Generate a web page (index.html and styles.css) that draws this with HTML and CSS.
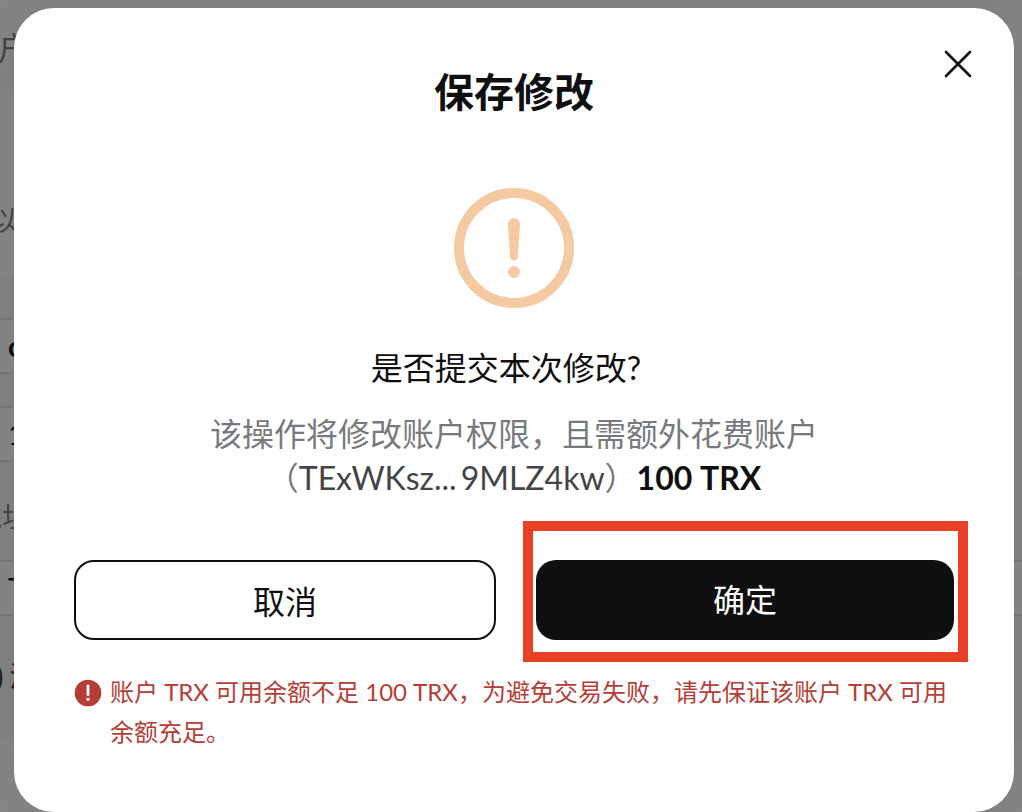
FILE: index.html
```html
<!DOCTYPE html>
<html lang="zh-CN">
<head>
<meta charset="utf-8">
<title>保存修改</title>
<link rel="stylesheet" href="styles.css">
</head>
<body>
<div class="page" aria-hidden="true">
  <div class="page-header"><span class="page-tab">户</span></div>
  <div class="page-intro"><span class="page-hint">以</span></div>
  <div class="page-form">
    <div class="field field-first"><span>o</span></div>
    <div class="field field-second"><span>1</span></div>
    <div class="field-label">地址</div>
    <div class="field field-third"><span>T</span></div>
    <div class="page-check"><span>)</span><span>添</span></div>
  </div>
</div>
<main class="dialog" role="dialog" aria-modal="true" aria-labelledby="dialog-title">
  <button class="close" type="button" aria-label="关闭">
    <svg viewBox="0 0 28 28" width="28" height="28"><path d="M2 2 26 26M26 2 2 26" fill="none" stroke="#0f0f0f" stroke-width="2.6" stroke-linecap="round"/></svg>
  </button>
  <h1 class="title" id="dialog-title">保存修改</h1>
  <svg class="warn" viewBox="0 0 120 120" width="120" height="120" fill="#f5c9a2">
    <circle cx="60" cy="60" r="55" fill="none" stroke="#f5c9a2" stroke-width="10"/>
    <path d="M54 36a6 6 0 0 1 12 0L64 68.500a4 4 0 0 1-8 0Z"/>
    <circle cx="60" cy="84" r="6"/>
  </svg>
  <p class="question">是否提交本次修改?</p>
  <p class="desc">该操作将修改账户权限，且需额外花费账户<br>（<span class="account"><span>TExWKsz...</span><span>9MLZ4kw</span></span>）<strong>100 TRX</strong></p>
  <div class="actions">
    <button class="btn btn-cancel" type="button">取消</button>
    <button class="btn btn-ok" type="button">确定</button>
  </div>
  <div class="note">
    <svg class="note-icon" viewBox="0 0 28 28" width="28" height="28">
      <circle cx="14" cy="14" r="13.300" fill="#b43e36"/>
      <path d="M14 7V15.500" stroke="#fff" stroke-width="2.800" stroke-linecap="round"/>
      <circle cx="14" cy="20.300" r="1.600" fill="#fff"/>
    </svg>
    <p class="note-text">账户 TRX 可用余额不足 100 TRX，为避免交易失败，请先保证该账户 TRX 可用余额充足。</p>
  </div>
</main>
</body>
</html>
```
FILE: styles.css
```css
* { box-sizing: border-box; }

body {
  position: relative;
  margin: 0;
  overflow-x: hidden;
  background: #808080;
  color: #0f0f0f;
  font-family: Lato, "Noto Sans CJK SC", sans-serif;
}

h1, p { margin: 0; }

.page {
  position: absolute;
  inset: 0;
  overflow: hidden;
  background: #858585;
  color: #434547;
  font-size: 28px;
  line-height: 44px;
}

.page-header {
  height: 94px;
  padding-top: 26px;
  background: #828486;
  font-size: 32px;
}

.page-tab { margin-left: -2px; }

.page-hint { margin-left: -10px; }

.page-intro {
  height: 184px;
  padding-top: 104px;
  background: #868686;
}

.page-form {
  height: 460px;
  padding-top: 40px;
  background: #828282;
}

.field {
  height: 56px;
  padding-left: 8px;
  border: solid #777879;
  border-width: 2px 0;
  background: #868686;
  color: #0b0b0b;
  font-size: 28px;
  line-height: 52px;
}

.field-first,
.field-second { width: 50%; }

.field-first { font-weight: 700; }

.field-second { margin-top: 32px; }

.field-label {
  margin: 32px 0 20px -26px;
  line-height: 46px;
}

.page-check {
  display: flex;
  gap: 6px;
  margin-top: 38px;
  margin-left: -4px;
  color: #202122;
  font-size: 28px;
}

.dialog {
  position: relative;
  margin: 8px 8px 0 14px;
  padding: 56px 60px 60px;
  border-radius: 40px;
  background: #fff;
  box-shadow: 0 0 40px rgba(0, 0, 0, 0.06);
  text-align: center;
}

.close {
  position: absolute;
  top: 42px;
  right: 42px;
  display: flex;
  padding: 0;
  border: 0;
  background: none;
}

.title {
  font-size: 40px;
  font-weight: 700;
  line-height: 56px;
}

.warn {
  display: block;
  margin: 68px auto 38px;
}

.question {
  padding-right: 16px;
  font-size: 32px;
  line-height: 44px;
}

.desc {
  margin-top: 22px;
  color: #777a7d;
  font-size: 32px;
  line-height: 44px;
}

.account {
  display: inline-flex;
  gap: 4px;
  color: #434547;
}

.desc strong {
  color: #0f0f0f;
  font-weight: 700;
}

.actions {
  display: flex;
  gap: 40px;
  margin-top: 60px;
}

.btn {
  position: relative;
  box-sizing: content-box;
  flex: 1;
  padding: 0;
  border: 0;
  border-radius: 20px;
  font: inherit;
  font-size: 32px;
  line-height: 80px;
}

.btn-cancel {
  padding-top: 4px;
  border: 2px solid #0f0f0f;
  background: #fff;
  color: #0f0f0f;
  line-height: 72px;
}

.btn-ok {
  background: #0f0f0f;
  color: #fff;
}

.btn-ok::after {
  content: "";
  position: absolute;
  inset: -39px -14px -22px -13px;
  border: 10px solid #ea4026;
}

.note {
  display: flex;
  gap: 8px;
  margin-top: 32px;
  color: #b43e36;
  font-size: 24px;
  line-height: 40px;
  text-align: left;
}

.note-icon {
  flex: none;
  margin-top: 7px;
}

.note-text { flex: 1; }
```
